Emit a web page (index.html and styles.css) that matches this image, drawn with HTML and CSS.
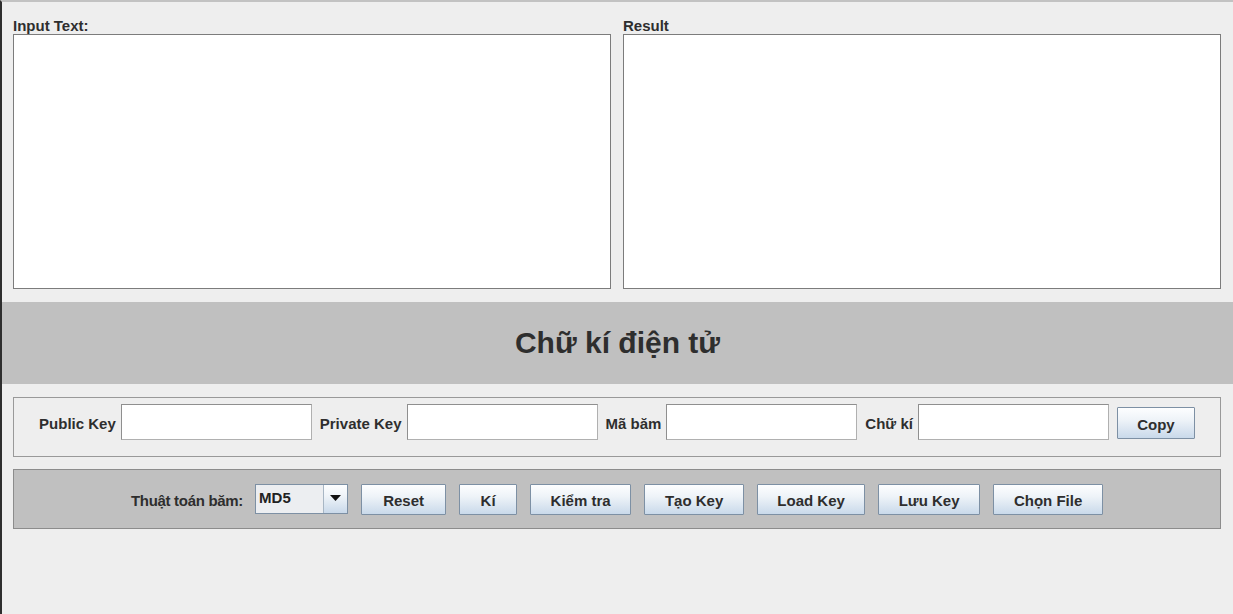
FILE: index.html
```html
<!DOCTYPE html>
<html lang="vi">
<head>
<meta charset="utf-8">
<title>Chữ kí điện tử</title>
<link rel="stylesheet" href="styles.css">
</head>
<body>
<div class="app">
  <div class="top">
    <div class="col">
      <div class="lbl">Input Text:</div>
      <div class="area"></div>
    </div>
    <div class="col">
      <div class="lbl">Result</div>
      <div class="area"></div>
    </div>
  </div>
  <div class="banner">Chữ kí điện tử</div>
  <div class="panel keys">
    <span class="flabel">Public Key</span><div class="field"></div>
    <span class="flabel">Private Key</span><div class="field"></div>
    <span class="flabel">Mã băm</span><div class="field"></div>
    <span class="flabel">Chữ kí</span><div class="field"></div>
    <button class="btn copy">Copy</button>
  </div>
  <div class="panel actions">
    <span class="flabel algo">Thuật toán băm:</span>
    <div class="combo">
      <span class="combo-text">MD5</span>
      <span class="combo-arrow"><svg width="11" height="6" viewBox="0 0 11 6"><path d="M0 0H11L5.5 6Z" fill="#111"/></svg></span>
    </div>
    <button class="btn w-reset">Reset</button>
    <button class="btn w-ki">Kí</button>
    <button class="btn w-kiem">Kiểm tra</button>
    <button class="btn w-tao">Tạo Key</button>
    <button class="btn w-load">Load Key</button>
    <button class="btn w-luu">Lưu Key</button>
    <button class="btn w-chon">Chọn File</button>
  </div>
</div>
</body>
</html>
```

FILE: styles.css
```css
* { box-sizing: border-box; }
html, body { margin: 0; padding: 0; }
body {
  font-family: "Liberation Sans", Arial, sans-serif;
  color: #2e2e2e;
  background: #eeeeee;
}
.app {
  width: 1233px;
  height: 614px;
  border-top: 2px solid #c2c2c2;
  border-left: 2px solid #2e2e2e;
  background: #eeeeee;
  overflow: hidden;
}
.top {
  display: flex;
  gap: 12px;
  padding: 16px 12px 0 11px;
}
.col {
  width: 598px;
  display: flex;
  flex-direction: column;
}
.lbl {
  font-size: 15px;
  font-weight: bold;
  line-height: 16px;
  height: 16px;
}
.area {
  height: 255px;
  background: #fff;
  border: 1px solid #7c7c7c;
}
.banner {
  margin-top: 13px;
  height: 82px;
  background: #c0c0c0;
  display: flex;
  align-items: center;
  justify-content: center;
  font-size: 30px;
  font-weight: bold;
  color: #2e2e2e;
}
.panel {
  margin: 13px 12px 0 11px;
  height: 60px;
  border: 1px solid #999;
  display: flex;
  justify-content: center;
}
.keys {
  align-items: flex-start;
  padding-top: 6px;
}
.keys .flabel { margin: 0 5px 0 8px; height: 36px; display: flex; align-items: center; padding-top: 2px; }
.keys .flabel:first-child { margin-left: 0; }
.flabel {
  font-size: 15px;
  font-weight: bold;
  white-space: nowrap;
}
.field {
  width: 191px;
  height: 36px;
  background: #fff;
  border: 1px solid #8f8f8f;
  border-right-color: #b0b0b0;
  border-bottom-color: #b0b0b0;
}
.btn {
  font-family: "Liberation Sans", Arial, sans-serif;
  font-size: 15px;
  font-weight: bold;
  color: #2e2e2e;
  height: 31px;
  padding: 2px 0 0 0;
  border: 1px solid #7d90a4;
  border-radius: 1px;
  background: linear-gradient(to bottom, #fdfeff 0%, #eef3f8 40%, #c9d9ea 100%);
  cursor: default;
}
.copy {
  width: 78px;
  height: 32px;
  margin: 3px 0 0 8px;
}
.actions {
  margin-top: 12px;
  background: #c0c0c0;
  border-color: #8c8c8c;
  align-items: flex-start;
  padding-top: 14px;
  gap: 13px;
}
.algo { height: 30px; display: flex; align-items: center; padding-top: 2px; letter-spacing: -0.3px; margin-right: -1px; }
.combo {
  width: 93px;
  height: 30px;
  display: flex;
  border: 1px solid #7d90a4;
  background: #eceef1;
}
.combo-text {
  flex: 1;
  font-size: 15px;
  font-weight: bold;
  padding: 2px 0 0 3px;
  line-height: 22px;
  color: #222;
}
.combo-arrow {
  width: 24px;
  border-left: 1px solid #a8b6c4;
  background: linear-gradient(to bottom, #fdfeff 0%, #eef3f8 40%, #c9d9ea 100%);
  display: flex;
  align-items: center;
  justify-content: center;
  padding-bottom: 3px;
}
.w-reset { width: 85px; }
.w-ki { width: 58px; }
.w-kiem { width: 101px; }
.w-tao { width: 100px; }
.w-load { width: 108px; }
.w-luu { width: 102px; }
.w-chon { width: 110px; }
```
